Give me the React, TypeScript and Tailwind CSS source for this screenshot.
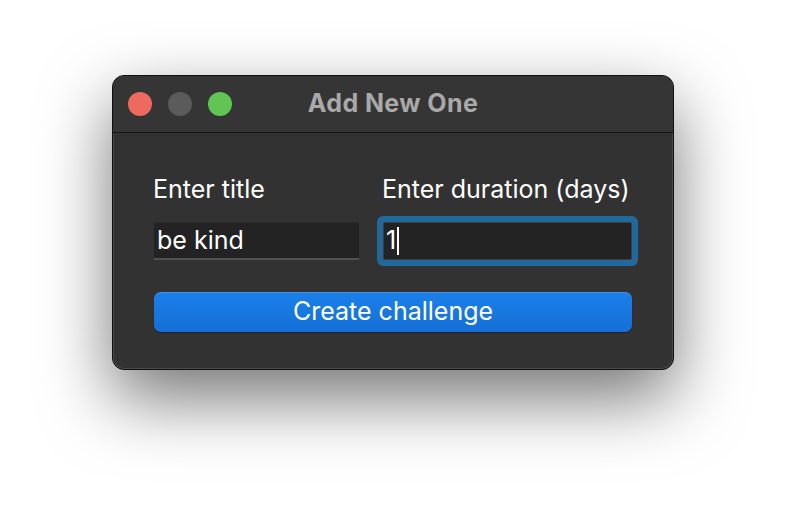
export default function App() {
  return (
    <div className="w-[786px] h-[518px] bg-white pt-[75px] font-['Inter','Noto_Sans',sans-serif]">
      {/* Dialog window */}
      <div className="mx-auto w-[562px] h-[295px] rounded-[12px] bg-[#323232] border border-[#111] shadow-[0_28px_70px_rgba(0,0,0,0.55),inset_0_0_0_1px_rgba(255,255,255,0.12)] overflow-hidden flex flex-col">
        {/* Title bar */}
        <div className="h-[57px] shrink-0 grid grid-cols-[1fr_auto_1fr] items-center bg-[#353535] border-b border-[#161616]">
          <div className="flex items-center gap-4 pl-[15px]">
            <span className="w-6 h-6 rounded-full bg-[#ee6a5f]" />
            <span className="w-6 h-6 rounded-full bg-[#5b5b5b]" />
            <span className="w-6 h-6 rounded-full bg-[#61c554]" />
          </div>
          <div className="text-[25px] font-bold text-[#a9a9a9] tracking-[0.4px]">Add New One</div>
          <div />
        </div>

        {/* Body */}
        <div className="flex-1 pl-[40px] pt-[41px]">
          <div className="flex gap-[23px]">
            <div className="w-[206px] flex flex-col gap-[18px]">
              <label className="text-[25px] leading-[30px] text-white">Enter title</label>
              <div className="h-[38px] ml-[1px] bg-[#232323] border-t border-[#2c2c2c] border-b-2 border-b-[#505050] flex items-center pl-[3px] text-[25px] text-white">
                be kind
              </div>
            </div>
            <div className="w-[250px] flex flex-col gap-[18px]">
              <label className="text-[25px] leading-[30px] text-white">Enter duration (days)</label>
              <div className="h-[38px] ml-[1px] rounded-[2px] bg-[#232323] border border-[#3e3e3e] ring-[6px] ring-[#22689a] flex items-center pl-[2px] text-[25px] text-white">
                1<span className="w-[2px] h-[28px] bg-white ml-[1px]" />
              </div>
            </div>
          </div>

          <button className="mt-[32px] ml-[1px] w-[478px] h-[40px] rounded-[7px] bg-gradient-to-b from-[#1b80ea] to-[#156fd6] shadow-[0_1px_1px_rgba(0,0,0,0.35),inset_0_1px_0_rgba(255,255,255,0.15)] text-[25px] text-white">
            Create challenge
          </button>
        </div>
      </div>
    </div>
  )
}
